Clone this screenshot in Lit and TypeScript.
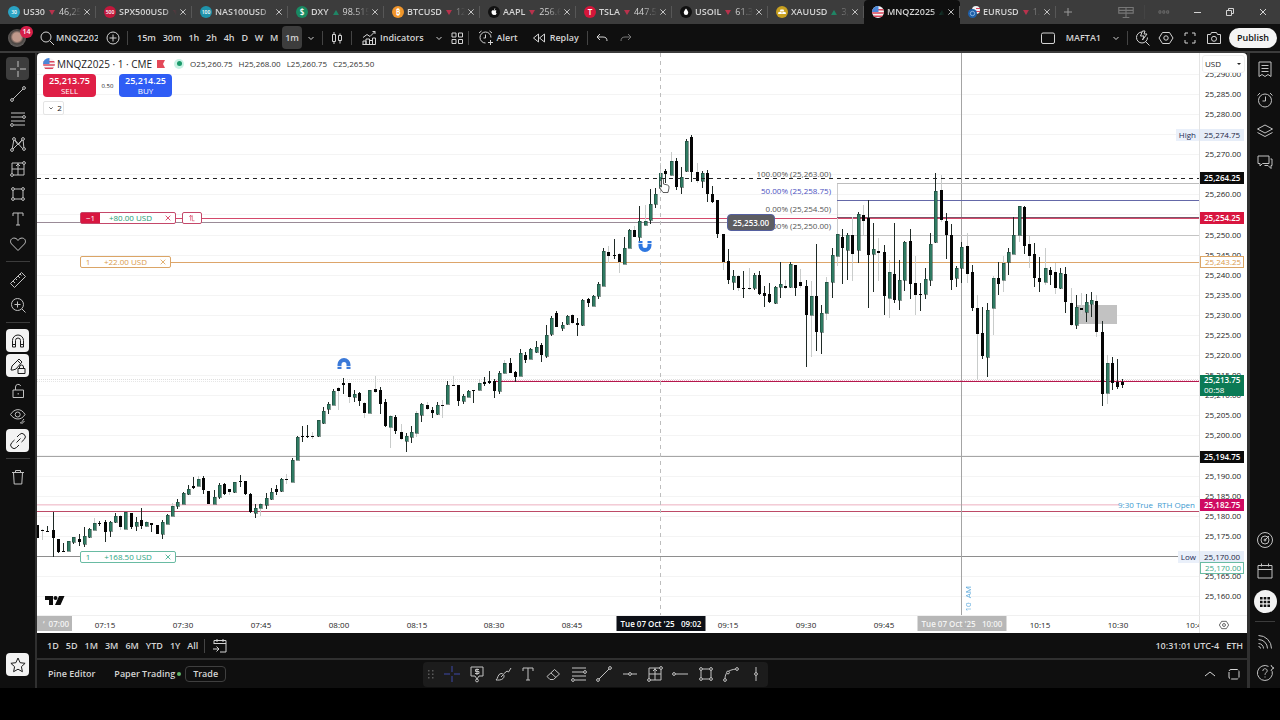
import { LitElement, html, svg, css, TemplateResult } from "lit";
import { customElement, property } from "lit/decorators.js";
import { classMap } from "lit/directives/class-map.js";

const node = (x: number, y: number) => svg`<circle cx=${x} cy=${y} r="1.4" fill="var(--node, #0f0f0f)"/>`;

const ICONS: Record<string, TemplateResult> = {
  cross: svg`<path d="M9 1v6M9 11v6M1 9h6M11 9h6"/>`,
  trend: svg`<path d="M4 14L14 4"/>${node(3, 15)}${node(15, 3)}`,
  fib: svg`<path d="M2 3h14M2 7h12M2 11h14M5 15h11"/>${node(15, 7)}${node(3, 15)}`,
  pattern: svg`<path d="M3 15L5 4l9 10M3 15L14 4l1 10M5 4l4 6 5-6"/>${node(3, 15)}${node(5, 4)}${node(14, 4)}${node(15, 14)}`,
  forecast: svg`<path d="M3 3h12v12H3zM3 9h12M9 3v12M7 6l2-2 2 2"/>${node(15, 3)}${node(3, 15)}`,
  rect: svg`<path d="M4 4h10v10H4z"/>${node(4, 4)}${node(14, 4)}${node(4, 14)}${node(14, 14)}`,
  text: svg`<path d="M4 6V3h10v3M9 3v12M7 15h4"/>`,
  heart: svg`<path d="M9 15.500L2.600 9C.6 6.800 1.500 3.500 4.600 3.100 6.500 2.900 8 3.800 9 5.500 10 3.800 11.500 2.900 13.400 3.100 16.500 3.500 17.400 6.800 15.400 9z"/>`,
  ruler: svg`<path d="M1.500 12.500l11-11 4 4-11 11zM4 10l2 2M6.500 7.500L8 9M9 5l2 2M11 3l1.500 1.500"/>`,
  zoomin: svg`<circle cx="8.500" cy="8.500" r="6"/><path d="M13 13l3.500 3.500M8.500 5.500v6M5.500 8.500h6"/>`,
  magnet: svg`<path d="M3.500 15V8.500a5.500 5.500 0 0 1 11 0V15h-3V8.500a2.500 2.500 0 0 0-5 0V15zM3.500 12.500h3M11.500 12.500h3"/>`,
  penlock: svg`<path d="M2 13l1-4L10 2l3 3-6 7-3 1zM8.500 3.500l3 3M9 11.500h7v5H9zM10.500 11.500V10a2 2 0 0 1 4 0v1.500"/>`,
  lock: svg`<path d="M4 8h10.500v7.500H4zM6.500 8V5a2.700 2.700 0 0 1 5.200-1M9.200 11v1.500"/>`,
  eye: svg`<path d="M1.500 7.500c4-6.500 11-6.500 14.500 0-3.500 6-10.500 6-14.500 0z"/><circle cx="8.700" cy="7.500" r="2.500"/><path d="M11 16c2 0 2-2 4-4M12.500 17l3-3"/>`,
  link: svg`<path d="M7.500 10.500l4-4M8 5l2.500-2.500a3.300 3.300 0 0 1 4.800 4.800L12.500 10M10 13l-2.500 2.500a3.300 3.300 0 0 1-4.800-4.800L5.500 8"/>`,
  trash: svg`<path d="M3 4.500h12M6.500 4.500v-2h5v2M4.500 4.500l.7 11.500h7.600l.7-11.500"/>`,
  star: svg`<path d="M9 2l2.100 4.700 5 .6-3.700 3.400 1 5L9 13.200l-4.400 2.500 1-5L1.900 7.300l5-.6z"/>`,
  search: svg`<circle cx="8" cy="8" r="5"/><path d="M12 12l4 4"/>`,
  pluscircle: svg`<circle cx="9" cy="9" r="6"/><path d="M9 5.500v7M5.500 9h7"/>`,
  chev: svg`<path d="M6.500 8L9 10.500 11.500 8"/>`,
  up: svg`<path d="M4 11l5-4 5 4"/>`,
  candles: svg`<path d="M4.500 5.500h3v7h-3zM6 3v2.500M6 12.500V15M10.500 6.500h3v5h-3zM12 4.500v2M12 11.500v3"/>`,
  indicators: svg`<path d="M3 15.500V12h3v3.500M6 15.500V10h3.500v5.500M9.500 15.500v-4h3v4M12.500 15.500V9h3v6.500M2.500 15.500h13M3 8.500l4-3 3 2 5-5M12.500 2.500H15V5"/>`,
  grid4: svg`<path d="M4 4h4v4H4zM10.500 4h4v4h-4zM4 10.500h4v4H4zM10.500 10.500h4v4h-4z"/>`,
  alert: svg`<path d="M14 8.500A5.500 5.500 0 1 0 8.500 14M8.500 5.500v3.500H6.500M2 4l2.500-2M12.500 2L15 4M13.500 11v5M11 13.500h5"/>`,
  clock: svg`<circle cx="9" cy="9.500" r="6.500"/><path d="M9.500 5.500v4.500H6.500M1.500 4.500L4 2M14 2l2.500 2.500"/>`,
  replay: svg`<path d="M8.500 5v8L3.500 9zM14.500 5v8l-5-4z"/>`,
  undo: svg`<path d="M7 5L4 8l3 3M4 8h6c3 0 4 1.500 4 4"/>`,
  redo: svg`<path d="M11 5l3 3-3 3M14 8H8c-3 0-4 1.500-4 4"/>`,
  layout: svg`<rect x="2.500" y="4" width="13" height="10.500" rx="1.500"/>`,
  square: svg`<rect x="4" y="4.500" width="10" height="9.500" rx="2" stroke-dasharray="7 1"/>`,
  quick: svg`<path d="M14.500 8.500A5.500 5.500 0 1 1 9 3M12.500 12.500l4 4M9.500 2l-2 5h3.500l-1.500 4 4.500-6h-3l1-3z"/>`,
  hex: svg`<path d="M5.500 3.500h7L16 9l-3.500 5.500h-7L2 9z"/><circle cx="9" cy="9" r="2.200"/>`,
  full: svg`<path d="M4 7V4h3M11 4h3v3M14 11v3h-3M7 14H4v-3"/>`,
  camera: svg`<path d="M2.500 5.500h3l1-2h5l1 2h3v9h-13z"/><circle cx="9" cy="9.800" r="2.500"/>`,
  news: svg`<path d="M3 2h12v14.500l-3-2-3 2-3-2-3 2zM5.500 5.500h7M5.500 8.500h7M5.500 11.500h7"/>`,
  layers: svg`<path d="M9 3l7.500 4L9 11 1.500 7zM1.500 10.500L9 14.500l7.500-4"/>`,
  chat: svg`<path d="M2 3h11v7.500H6.500L4 13v-2.500H2zM8.500 12.500H12l3 3v-3h1V6h-1.500"/>`,
  target: svg`<circle cx="9" cy="9" r="7.500"/><circle cx="9" cy="9" r="4"/><path d="M9 9l4-4"/><circle cx="9" cy="9" r="1"/>`,
  cal: svg`<path d="M2 3.500h14v12.500H2zM2 7.500h14M5.500 1.500v3M12.500 1.500v3"/>`,
  apps: svg`<path fill="#0f0f0f" stroke="none" d="M4 4h2.600v2.600H4zM7.700 4h2.600v2.600H7.700zM11.400 4H14v2.600h-2.600zM4 7.700h2.600v2.600H4zM7.700 7.700h2.600v2.600H7.700zM11.400 7.700H14v2.600h-2.600zM4 11.400h2.600V14H4zM7.700 11.400h2.600V14H7.700zM11.400 11.400H14V14h-2.600z"/>`,
  rss: svg`<path d="M2.500 2.500A13 13 0 0 1 15.500 15.500M2.500 6.500a9 9 0 0 1 9 9M2.500 10.500a5 5 0 0 1 5 5M2.500 13.500a2 2 0 0 1 2 2"/>`,
  help: svg`<path d="M16.200 7.200A7.500 7.500 0 1 1 12.500 2.400M6.800 7c0-3 4.400-3 4.400-.2 0 1.700-2.200 1.800-2.200 4M9 12.500v1M15 1l1 2 2 1-2 1-1 2"/>`,
  goto: svg`<path d="M3 7V3.500h12V15H9M3 6.500h12M6 2v3M12 2v3M2 12h6M5.500 9.500L8 12l-2.500 2.500"/>`,
  drag: svg`<path fill="#5a5a5a" stroke="none" d="M6 5h1.500v1.500H6zM10 5h1.500v1.500H10zM6 8.500h1.500V10H6zM10 8.500h1.500V10H10zM6 12h1.500v1.500H6zM10 12h1.500v1.500H10z"/>`,
  note: svg`<path d="M3 2h12v9h-4l-2 3-2-3H3zM11 4.500H7.500v2H11v2H7M9 3.500v6.500"/>${node(9, 15.500)}`,
  brush: svg`<path d="M2 15c2-1 1.500-6 5-6.500 3 0 4 3 2 5s-5 1.500-7 1.500zM9.500 9L13 6l1.500 1L17 3M7 12l2-2"/>`,
  eraser: svg`<path d="M3 11.500l7.500-7 5 4.500-6 5.500H6zM7 8l5 4.500"/>`,
  hline: svg`<path d="M2 9h14"/>${node(9, 9)}`,
  ray: svg`<path d="M4 9h13"/>${node(3, 9)}`,
  curve: svg`<path d="M3 14c0-6 3-9 11-10"/>${node(3, 15)}${node(6, 7.500)}${node(15, 4)}`,
  vline: svg`<path d="M9 2v14"/>${node(9, 9)}`,
  plus: svg`<path d="M9 5v8M5 9h8"/>`,
  close: svg`<path d="M6 6l6 6M12 6l-6 6"/>`,
  panes: svg`<path d="M2.500 5h13v5h-13zM9 5v9M6 14h6M2.500 7.500h13"/>`,
  dots: svg`<path d="M2.500 7.500H5v3H2.500zM7.500 7.500H10v3H7.500zM12.500 7.500H15v3h-2.500z"/>`,
  min: svg`<path d="M6 9.500h7"/>`,
  restore: svg`<path d="M5.500 7.500h5v5h-5zM7.500 7.500v-2h5v5h-2"/>`,
  flip: svg`<path d="M4 7l2.500-3L9 7M6.500 4v10M9.500 4v10h4"/>`,
};

const icon = (name: string, size = 18) =>
  html`<svg class="icon" width=${size} height=${size} viewBox="0 0 18 18" fill="none" stroke="currentColor" aria-hidden="true">${ICONS[name]}</svg>`;

const flag = (size: number) => html`<svg width=${size} height=${size} viewBox="0 0 12 12" aria-hidden="true">
  <clipPath id="disc"><circle cx="6" cy="6" r="6"/></clipPath>
  <g clip-path="url(#disc)"><path fill="#f4f4f6" d="M0 0h12v12H0z"/><path stroke="#d9455b" stroke-width="1.500" d="M0 3.800h12M0 7h12M0 10.200h12"/><path fill="#4a86d8" d="M0 0h6.500v6H0z"/></g></svg>`;

type Tone = "up" | "down";
interface Tab { sym: string; price: string; tone: Tone; color: string; mark: string; active?: boolean }
const TABS: Tab[] = [
  { sym: "US30", price: "46,25", tone: "down", color: "#2aa3c4", mark: "30" },
  { sym: "SPX500USD", price: "", tone: "down", color: "#c2183c", mark: "500" },
  { sym: "NAS100USD", price: "", tone: "up", color: "#1f93ab", mark: "100" },
  { sym: "DXY", price: "98.515", tone: "up", color: "#198a62", mark: "$" },
  { sym: "BTCUSD", price: "122", tone: "down", color: "#f0962c", mark: "₿" },
  { sym: "AAPL", price: "256.6", tone: "down", color: "#111111", mark: "apple" },
  { sym: "TSLA", price: "447.52", tone: "down", color: "#d5163a", mark: "T" },
  { sym: "USOIL", price: "61.30", tone: "down", color: "#111111", mark: "oil" },
  { sym: "XAUUSD", price: "3,9", tone: "up", color: "#c8a020", mark: "gold" },
  { sym: "MNQZ2025", price: "", tone: "up", color: "", mark: "us", active: true },
  { sym: "EURUSD", price: "1.1", tone: "down", color: "#2166b0", mark: "eu" },
];

const tabMark = (t: Tab) => {
  if (t.mark === "us") return flag(12);
  if (t.mark === "apple") return html`<svg width="12" height="12" viewBox="0 0 12 12"><circle cx="6" cy="6" r="6" fill="#111"/><path fill="#fff" d="M3.500 6c0-2 1.500-2 2.500-1.600C7.500 4 8.500 4.500 8.500 5c-1 .5-.8 1.800.2 2.200C8 9 7 9.200 6 8.800 5 9.200 3.500 8 3.500 6zM6 4c0-1 .6-1.600 1.300-1.700C7.300 3.200 6.800 3.800 6 4z"/></svg>`;
  if (t.mark === "oil") return html`<svg width="12" height="12" viewBox="0 0 12 12"><circle cx="6" cy="6" r="6" fill="#111"/><path fill="#fff" d="M6 2.500c1.500 2 2.200 3 2.200 4.300a2.200 2.200 0 0 1-4.400 0C3.800 5.500 4.500 4.500 6 2.500z"/></svg>`;
  if (t.mark === "gold") return html`<svg width="12" height="12" viewBox="0 0 12 12"><circle cx="6" cy="6" r="6" fill="#c8a020"/><path fill="#fff" d="M4.500 3.500h3l.8 2H3.700zM2.500 6h3l.5 2H2zM6.500 6h3l.5 2H6z"/></svg>`;
  if (t.mark === "eu") return html`<svg width="12" height="12" viewBox="0 0 12 12"><circle cx="8" cy="4" r="4" fill="#f2f2f4"/><path stroke="#d9455b" d="M8 2.500h4M8 5.500h4"/><circle cx="4.500" cy="7.500" r="4.500" fill="#1f5fa8"/><circle cx="4.500" cy="7.500" r="2.200" fill="none" stroke="#9cc4ea" stroke-width=".8"/></svg>`;
  return html`<span class="disc" style="background:${t.color}"><span class=${t.mark.length > 1 ? "tiny" : ""}>${t.mark}</span></span>`;
};

/* One bar per minute from 07:02: high, body top, body bottom, low, then g (rising), k (falling), l = faint wick. */
const BARS = `525 525 538 538 k|529 530 531 540 kl|526 531 532 532 k|512 530 538 557 k|539 539 552 553 k|543 551 552 552 k|541 541 551 551 g|537 537 542 544 g|534 539 542 546 k|527 536 544 547 g|528 529 537 538 g|518 523 530 530 gl|521 523 524 526 k|520 522 532 542 k|521 522 531 537 g|513 516 522 523 g|515 516 527 530 kl|512 512 529 529 g|513 513 527 529 k|517 522 526 531 g|508 520 526 529 k|521 522 526 527 gl|523 523 525 532 k|525 525 534 534 k|520 522 534 539 g|514 515 524 524 g|503 506 516 516 gl|499 502 506 509 g|492 493 504 504 g|485 489 494 495 g|477 486 488 489 k|476 479 486 486 gl|476 478 490 494 k|491 491 504 504 k|490 497 504 504 g|483 485 497 499 g|483 484 494 495 k|489 489 492 495 kl|482 482 492 493 g|475 481 482 487 k|481 481 494 495 k|493 494 512 513 k|504 508 513 518 g|503 504 508 516 gl|493 498 505 509 g|488 492 499 500 g|485 489 492 495 k|478 479 491 492 g|474 479 480 484 kl|458 460 482 482 g|436 437 460 460 g|426 436 437 442 k|425 436 437 438 k|432 436 437 439 kl|420 420 436 437 g|407 411 423 424 g|402 404 409 414 g|389 391 405 405 g|387 388 391 410 kl|378 383 385 394 k|383 383 397 403 kl|390 394 397 402 g|392 393 401 406 k|402 403 413 418 kl|390 390 413 413 g|376 389 392 393 kl|387 390 404 414 k|399 402 426 427 k|415 416 427 448 gl|415 417 431 434 k|424 432 439 440 kl|433 436 441 452 g|426 432 437 443 g|411 413 433 437 gl|403 404 415 422 g|402 405 409 410 kl|407 410 413 418 k|402 405 414 415 g|400 405 406 418 kl|381 385 404 404 g|376 385 386 386 kl|385 385 401 406 k|394 396 401 404 g|390 391 397 397 g|390 390 391 403 k|379 383 390 391 gl|377 382 384 386 k|371 381 383 384 k|379 381 391 398 k|371 373 391 394 g|360 363 373 374 gl|358 363 373 373 k|371 372 377 382 k|349 353 376 376 g|352 355 360 363 k|348 349 359 359 g|341 347 352 353 g|343 345 355 362 k|325 335 356 358 g|316 318 334 336 g|311 313 327 327 k|322 325 328 331 g|315 316 324 325 g|314 315 323 324 kl|318 323 325 336 k|299 300 325 326 g|298 299 303 307 k|295 296 306 306 g|282 284 296 299 g|248 251 286 286 g|246 252 256 263 kl|239 255 256 259 k|253 254 262 273 kl|237 248 264 264 g|229 230 248 248 g|226 230 237 237 kl|206 221 237 243 g|205 221 225 226 gl|189 204 220 224 g|188 194 204 208 g|163 173 188 190 gl|169 171 174 183 k|152 161 175 176 gl|158 161 187 190 k|167 177 187 194 g|139 141 171 172 g|135 137 172 182 k|163 172 181 183 kl|171 173 181 188 g|170 173 194 202 k|186 194 202 203 k|200 200 234 238 k|234 234 262 270 kl|249 261 280 284 k|270 276 282 290 g|275 276 288 291 kl|271 288 289 298 k|268 288 289 290 kl|273 275 288 290 g|271 275 294 295 k|286 293 296 307 k|283 294 302 303 k|286 287 303 304 g|262 284 287 298 g|280 286 288 289 kl|262 264 287 288 g|265 265 288 296 k|269 282 286 288 kl|280 286 315 367 k|281 296 315 357 gl|244 296 332 351 k|305 313 332 354 g|277 282 313 320 gl|248 255 282 298 g|228 234 256 266 gl|229 237 248 284 k|233 235 250 280 g|217 235 254 281 kl|212 214 250 263 g|205 215 221 235 kl|200 218 255 308 k|223 249 254 292 g|238 251 253 281 kl|245 252 296 315 k|260 272 298 318 gl|223 274 300 303 k|260 280 300 310 g|241 242 280 291 g|229 241 284 299 k|256 283 295 315 kl|283 294 295 311 k|268 279 294 299 g|233 244 280 286 g|173 191 242 243 g|175 190 220 222 kl|213 221 235 259 k|224 235 280 290 k|266 268 278 287 g|242 247 268 283 g|233 246 274 283 kl|265 272 308 311 k|295 308 334 380 kl|307 333 356 359 k|303 310 357 377 g|276 278 308 335 gl|262 278 284 295 k|256 263 280 292 gl|248 252 262 275 g|217 235 254 254 g|206 206 235 242 gl|206 207 246 254 k|235 244 256 268 kl|243 254 278 287 k|257 278 282 292 k|248 268 282 285 gl|267 270 275 285 k|263 272 288 294 kl|268 273 288 289 g|267 274 302 313 k|288 303 325 326 kl|295 307 325 329 g|293 308 310 314 kl|294 302 312 322 g|292 300 304 317 g|295 301 332 337 kl|321 332 394 406 k|355 363 393 404 gl|357 363 383 390 k|359 382 387 389 k|379 382 385 388 k`
  .split("|")
  .map((row) => {
    const [h, t, b, l, kind] = row.split(" ");
    return { h: +h, t: +t, b: +b, l: +l, up: kind[0] === "g", faint: kind.length > 1 };
  });

const PANE_TOP = 53;
const PANE_LEFT = 37;
const MINUTE = 5.193;
const barX = (i: number) => Math.floor(37.600 + i * MINUTE - PANE_LEFT);
const priceY = (p: number) => Math.round(234.500 + (25250 - p) * 4.017 - PANE_TOP);
const timeX = (minutesFromSeven: number) => Math.round(27.100 + minutesFromSeven * MINUTE - PANE_LEFT);
const fmt = (p: number) => p.toLocaleString("en-US", { minimumFractionDigits: 2 });

const base = css`
  * { box-sizing: border-box; }
  button { font: inherit; color: inherit; background: none; border: 0; padding: 0; margin: 0; display: flex; align-items: center; justify-content: center; white-space: pre; }
  svg { display: block; flex: none; }
`;

@customElement("tv-chart")
export class TvChart extends LitElement {
  static styles = [base, css`
    :host { flex: 1; min-height: 0; display: grid; grid-template-columns: minmax(0, 1fr) 48px; grid-template-rows: minmax(0, 1fr) 18px; background: #fff; border-radius: 4px 4px 0 0; overflow: hidden; color: #1c1c1c; font-size: 8px; line-height: 12px; }
    .pane { position: relative; overflow: hidden; }
    .plot { position: absolute; inset: 0; width: 100%; height: 100%; }
    .over { position: absolute; white-space: pre; }
    .legend { position: absolute; left: 6px; top: 4px; display: flex; flex-direction: column; align-items: flex-start; gap: 4px; }
    .title { display: flex; align-items: center; height: 13px; font-size: 10px; }
    .title .name { margin-left: 2px; margin-right: 5px; }
    .dot { width: 10px; height: 10px; border-radius: 5px; background: #c8f2e4; display: grid; place-items: center; margin: 0 6px 0 9px; }
    .dot::after { content: ""; width: 5px; height: 5px; border-radius: 3px; background: #1b9a6b; }
    .ohlc { display: flex; gap: 6px; font-size: 8px; color: #333; }
    .deal { display: flex; align-items: center; }
    .deal button { flex-direction: column; width: 53px; height: 23px; border-radius: 4px; color: #fff; font-size: 9px; line-height: 10px; font-weight: 600; }
    .deal .small { font-weight: 400; font-size: 8px; }
    .sell { background: #df1f46; }
    .buy { background: #2f5df5; }
    .spread { width: 23px; text-align: center; font-size: 6px; }
    .count { width: 21px; height: 14px; border: 1px solid #e4e4e4; border-radius: 2px; }
    .order { display: flex; height: 12px; border: 1px solid; border-radius: 2px; background: #fff; left: 43px; line-height: 10px; }
    .order .qty { width: 14px; text-align: center; }
    .order .pnl { width: 66px; text-align: center; }
    .order.narrow .pnl { width: 61px; }
    .order button { width: 14px; }
    .red { color: #d2214a; border-color: #c4486a; }
    .red .qty { background: #d81640; color: #fff; width: 19px; }
    .red .pnl { color: #249a72; width: 61px; }
    .flip { left: 145px; width: 20px; justify-content: center; }
    .orange { color: #d99a4c; border-color: #dba566; }
    .green { color: #2ba582; border-color: #69bba3; }
    .fib { right: 368px; text-align: right; color: #555; }
    .fib.blue { color: #4a4fc0; }
    .tip { left: 690px; width: 48px; height: 17px; border-radius: 4px; border: 1px solid #5560a0; background: #5d5d62; color: #fff; text-align: center; line-height: 15px; font-weight: 600; }
    .note { right: 4px; color: #3d9ad0; }
    .hour { color: #5aa8dc; writing-mode: vertical-rl; transform: rotate(180deg); font-size: 8px; }
    .edge { right: 0; padding: 0 3px; background: #eaf0fa; color: #222a55; }
    .axis { position: relative; overflow: hidden; border-left: 1px solid #e4e4e4; }
    .axis .lab { position: absolute; left: 5px; line-height: 12px; margin-top: -6px; }
    .axis .tag { position: absolute; left: 0; width: 44px; padding-left: 4px; line-height: 12px; margin-top: -6px; font-weight: 600; color: #fff; }
    .tag.black { background: #0b0b0b; }
    .tag.crimson { background: #d8153f; }
    .tag.magenta { background: #cf0a62; }
    .axis .tag.teal { background: #0b7a55; line-height: 10px; padding-bottom: 1px; }
    .axis .tag.pale { background: #e6edf8; color: #1c2440; font-weight: 400; }
    .axis .tag.line-orange, .axis .tag.line-green { background: #fff; font-weight: 400; line-height: 10px; border: 1px solid #dba566; color: #d99a4c; }
    .axis .tag.line-green { border-color: #69bba3; color: #3aa888; }
    .teal span { font-weight: 400; }
    select { position: absolute; left: 2px; top: 2px; width: 43px; height: 18px; z-index: 1; appearance: none; border: 1px solid #eee; border-radius: 3px; background: #fff; font: inherit; color: #222; padding: 0 2px; }
    .arrow { position: absolute; left: 37px; top: 10px; z-index: 2; border: 2px solid transparent; border-top-color: #222; }
    .times { position: relative; overflow: hidden; border-top: 1px solid #f0f0f0; }
    .times span { position: absolute; transform: translateX(-50%); line-height: 17px; white-space: pre; }
    .times .cursor, .times .session { background: #0c0f16; color: #fff; line-height: 15px; width: 89px; text-align: center; font-weight: 600; }
    .times .session { background: rgba(178, 178, 178, .93); color: #f4f4f4; }
    .times .first { left: 0; transform: none; width: 35px; padding-left: 3px; }
    .corner { border-left: 1px solid #e4e4e4; border-top: 1px solid #f0f0f0; }
    .corner button { width: 100%; height: 100%; }
  `];

  private plot() {
    const line = (y: number, color: string, x1: number | string = 0, x2: number | string = "100%", dash = "") =>
      svg`<line x1=${x1} x2=${x2} y1=${y + .5 - PANE_TOP} y2=${y + .5 - PANE_TOP} stroke=${color} stroke-dasharray=${dash}/>`;
    const grid: number[] = [];
    for (let p = 25160; p <= 25290; p += 5) grid.push(p);
    return html`<svg class="plot" shape-rendering="crispEdges">
      ${grid.map((p) => svg`<line x1="0" x2="100%" y1=${priceY(p) + .5} y2=${priceY(p) + .5} stroke="#f4f4f4"/>`)}
      ${line(379, "#dedede", 0, "100%", "1 1")}${line(381, "#e6e6e6", 0, 457, "1 1")}
      ${line(456, "#a6a6a6")}
      ${line(504, "#f3ccd6", 0, 1082)}${line(505, "#f8e2e8", 0, 1082)}${line(511, "#bd4a66")}
      ${line(556, "#8e8e8e")}
      <rect x="1040" y="252" width="40" height="19" fill="#c2c2c2"/>
      <line x1="924.500" x2="924.500" y1="0" y2="100%" stroke="#a4a4a4"/>
      ${line(218, "#d4486a", 43)}${line(222, "#9a8b97", 0, 690)}
      ${line(262, "#dda56a", 43)}
      <line x1="800.500" x2="800.500" y1="130" y2="181" stroke="#cccccc"/>
      ${line(183, "#bdbdbd", 800)}${line(200, "#6468a8", 800)}${line(217, "#7d5368", 800)}${line(235, "#c4c4c4", 800)}
      ${line(380, "#eeb0c4", 457, "100%", "1 1")}${line(381, "#b4174c", 457)}
      ${BARS.map((c, i) => {
        const x = barX(i);
        return svg`<rect x=${x} y=${c.h - PANE_TOP} width="1" height=${c.l - c.h} fill=${c.faint ? "#c9cccb" : "#1f2a26"}/>
          <rect x=${x - 1} y=${c.t - PANE_TOP} width="3" height=${Math.max(1, c.b - c.t)} fill=${c.up ? "#2f7a62" : "#050505"} stroke=${c.up ? "#17352b" : "none"} stroke-width=".5"/>`;
      })}
      <line x1="623.500" x2="623.500" y1="0" y2="100%" stroke="#bdbdbd" stroke-dasharray="4 4"/>
      <line x1="0" x2="100%" y1="125.500" y2="125.500" stroke="#222" stroke-dasharray="4 4"/>
      <g shape-rendering="auto">
        <path d="M302.500 316v-4.500a4.500 4.500 0 0 1 9 0v4.500" fill="none" stroke="#3b79d8" stroke-width="4"/>
        <path d="M300 313.500h14" stroke="#fff" stroke-width=".8"/>
        <path d="M603.500 188v4.500a4.500 4.500 0 0 0 9 0V188" fill="none" stroke="#2e77e0" stroke-width="4"/>
        <path d="M601 190.500h14" stroke="#fff" stroke-width=".8"/>
        <path d="M624.500 133v-6.500q1.200-1.500 2 0V131l4 1q2 .5 1.500 3l-1 4.500h-5l-3.500-5q0-1.500 2-.5z" fill="#fff" stroke="#333" stroke-width=".8"/>
        <path d="M8 543h8v9h-4v-5H8zM22 543h5.500l-4 9H18z" fill="#0c0c0c"/><circle cx="18.500" cy="545" r="2" fill="#0c0c0c"/>
      </g>
    </svg>`;
  }

  private order(y: number, kind: string, qty: string, pnl: string) {
    return html`<div class="over order ${kind}" style="top:${y - PANE_TOP}px"><span class="qty">${qty}</span><span class="pnl">${pnl}</span><button aria-label="Cancel">${icon("close", 14)}</button></div>`;
  }

  render() {
    const labels: number[] = [];
    for (let p = 25160; p <= 25290; p += 5) labels.push(p);
    const tag = (y: number, cls: string, text: string | TemplateResult) =>
      html`<div class="tag ${cls}" style="top:${y - PANE_TOP}px">${text}</div>`;
    const times = [15, 30, 45, 60, 75, 90, 105, 135, 150, 165, 180, 195, 210, 225];
    return html`
      <div class="pane">
        ${this.plot()}
        <div class="legend">
          <div class="title">${flag(12)}<span class="name">MNQZ2025 · 1 · CME</span>
            <svg width="8" height="8" viewBox="0 0 8 8"><path fill="#e34858" d="M0 0h8L6 4l2 4H0z"/></svg>
            <span class="dot"></span>
            <span class="ohlc"><span>O25,260.75</span><span>H25,268.00</span><span>L25,260.75</span><span>C25,265.50</span></span></div>
          <div class="deal"><button class="sell">25,213.75<span class="small">SELL</span></button><span class="spread">0.50</span><button class="buy">25,214.25<span class="small">BUY</span></button></div>
          <button class="count">${icon("chev", 12)}2</button>
        </div>
        ${this.order(212, "red", "−1", "+80.00 USD")}
        <button class="over order red flip" style="top:159px" aria-label="Reverse position">${icon("flip", 10)}</button>
        ${this.order(256, "orange narrow", "1", "+22.00 USD")}
        ${this.order(551, "green", "1", "+168.50 USD")}
        <span class="over fib" style="top:115px">100.00% (25,263.00)</span>
        <span class="over fib blue" style="top:132px">50.00% (25,258.75)</span>
        <span class="over fib" style="top:150px">0.00% (25,254.50)</span>
        <span class="over fib" style="top:167px">-100.00% (25,250.00)</span>
        <span class="over tip" style="top:161px">25,253.00</span>
        <span class="over note" style="top:446px">9:30 True  RTH Open</span>
        <span class="over hour" style="left:925px;top:533px">10  AM</span>
        <span class="over edge" style="top:76px">High</span>
        <span class="over edge" style="top:498px">Low</span>
      </div>
      <div class="axis">
        ${labels.map((p) => html`<span class="lab" style="top:${priceY(p)}px">${fmt(p)}</span>`)}
        <select aria-label="Currency"><option>USD</option></select><i class="arrow"></i>
        ${tag(135, "pale", "25,274.75")}${tag(178, "black", "25,264.25")}${tag(218, "crimson", "25,254.25")}
        ${tag(262, "line-orange", "25,243.25")}${tag(381, "teal", html`25,213.75<br><span>00:58</span>`)}
        ${tag(457, "black", "25,194.75")}${tag(505, "magenta", "25,182.75")}
        ${tag(557, "pale", "25,170.00")}${tag(568, "line-green", "25,170.00")}
      </div>
      <div class="times">
        ${times.map((m) => html`<span style="left:${timeX(m)}px">${String(7 + Math.floor(m / 60)).padStart(2, "0")}:${String(m % 60).padStart(2, "0")}</span>`)}
        <span class="session first">‘  07:00</span>
        <span class="cursor" style="left:${timeX(122)}px">Tue 07 Oct '25   09:02</span>
        <span class="session" style="left:${timeX(180)}px">Tue 07 Oct '25   10:00</span>
      </div>
      <div class="corner"><button aria-label="Scale settings">${icon("hex", 12)}</button></div>`;
  }
}

@customElement("tool-button")
export class ToolButton extends LitElement {
  @property() name = "";
  @property() tone = "";
  @property() label = "";
  static styles = [base, css`
    :host { display: block; }
    button { width: 23px; height: 23px; border-radius: 4px; color: #c2c2c2; }
    .on { background: #3d3d3d; }
    .light { background: #f3f3f3; color: #1a1a1a; }
    .round { background: #f3f3f3; border-radius: 12px; }
    .blue { color: #3c49a8; }
  `];
  render() {
    return html`<button class=${this.tone} aria-label=${this.label || this.name}>${icon(this.name)}</button>`;
  }
}

const tool = (spec: string) => {
  if (spec === "-") return html`<i class="sep"></i>`;
  const [name, tone = ""] = spec.split(":");
  return html`<tool-button name=${name} tone=${tone}></tool-button>`;
};

@customElement("app-root")
export class AppRoot extends LitElement {
  static styles = [base, css`
    :host { box-sizing: border-box; display: flex; flex-direction: column; height: 100vh; padding-bottom: 32px; background: #000; color: #d4d4d4; font: 9px/12px "Open Sans", "Noto Sans", sans-serif; overflow: hidden; }
    .tabs { display: flex; height: 24px; background: #3c3c3c; flex: none; align-items: stretch; }
    .tab { flex: 0 1 96px; min-width: 0; display: flex; align-items: center; padding: 0 3px 0 8px; font-weight: 600; position: relative; }
    .tab::after { content: ""; width: 1px; height: 12px; background: #575757; position: absolute; right: 0; }
    .tab.active { background: #0f0f0f; border-radius: 4px 4px 0 0; }
    .tab .what { flex: 1; min-width: 0; margin-left: 3px; justify-content: flex-start; gap: 4px; overflow: hidden; -webkit-mask-image: linear-gradient(90deg, #000 75%, transparent); mask-image: linear-gradient(90deg, #000 75%, transparent); }
    .tab .price { font-weight: 400; }
    .tab .x { width: 12px; }
    .disc { width: 12px; height: 12px; border-radius: 6px; display: grid; place-items: center; color: #fff; font-size: 8px; line-height: 12px; flex: none; }
    .tiny { font-size: 5px; }
    .tri { flex: none; border: 3px solid transparent; border-top: 0; border-bottom: 5px solid #1f8565; }
    .tri.down { border-bottom: 0; border-top: 5px solid #b8324c; }
    .win { margin-left: auto; display: flex; align-items: center; padding-right: 1px; }
    .win button { width: 33px; }
    .win .faint, .dim { color: #777; }
    .add { width: 24px; color: #999; }
    .bar { display: flex; height: 27px; background: #0f0f0f; align-items: center; flex: none; font-weight: 600; padding: 0 3px 0 8px; }
    .rule { height: 2px; background: #3c3c3c; flex: none; }
    .avatar { position: relative; width: 18px; height: 18px; border-radius: 9px; background: radial-gradient(circle at 50% 45%, #c09a8c 0 32%, #4a4542 50%, #8d8c8c); }
    .badge { position: absolute; left: 12px; top: -3px; width: 13px; height: 12px; border-radius: 6px; background: #d6204a; color: #fff; font-size: 7px; line-height: 12px; text-align: center; }
    .search { margin-left: 12px; width: 60px; justify-content: flex-start; overflow: hidden; margin-right: 3px; }
    .w24 { width: 24px; }
    .vr { width: 1px; height: 14px; background: #444; flex: none; margin: 0 2px; }
    .ivs { display: flex; width: 168px; margin-left: 4px; justify-content: space-between; }
    .ivs button { padding: 0 3px; height: 23px; border-radius: 4px; }
    .ivs .sel { background: #3d3d3d; }
    .lbl { padding: 0 6px; gap: 2px; }
    .right { margin-left: auto; display: flex; align-items: center; }
    .publish { height: 20px; padding: 0 8px; border-radius: 10px; background: #f4f4f4; color: #111; margin-left: 3px; }
    .body { flex: 1; min-height: 0; display: flex; background: #0f0f0f; }
    .rail { width: 35px; flex: none; display: flex; flex-direction: column; align-items: center; gap: 2px; padding: 4px 0 12px; background: #0f0f0f; }
    .rail .sep { width: 24px; height: 1px; background: #3c3c3c; margin: 4px 0; flex: none; }
    .rail .push { margin-top: auto; }
    .rail.wide { width: 30px; gap: 8px; padding-bottom: 4px; }
    .rail.wide .sep { margin: 0; width: 20px; }
    .center { flex: 1; min-width: 0; display: flex; flex-direction: column; border: solid #303030; border-width: 0 3px 0 2px; }
    .ranges { height: 27px; flex: none; display: flex; align-items: center; gap: 1px; background: #0f0f0f; border-bottom: 2px solid #303030; padding: 0 1px 0 7px; font-weight: 600; }
    .ranges button { padding: 0 3px; }
    .ranges .right { gap: 4px; }
    .panel { height: 28px; flex: none; display: flex; align-items: center; padding: 0 1px 0 6px; background: #0f0f0f; font-weight: 600; }
    .docks { width: 380px; display: flex; align-items: center; }
    .docks button { padding: 0 5px; height: 16px; }
    .docks .paper { margin-left: 9px; padding-right: 4px; }
    .docks .paper::after { content: ""; width: 4px; height: 4px; border-radius: 2px; background: #5fb868; margin-left: 2px; }
    .docks .trade { border: 1px solid #3f3f3f; border-radius: 4px; padding: 0 7px; }
    .draw { --node: #1c1c1c; display: flex; justify-content: space-between; min-width: 345px; padding: 1px 0; background: #1c1c1c; border-radius: 4px; }
    .draw tool-button:first-child { margin-right: -4px; margin-left: -4px; }
  `];

  render() {
    return html`
      <nav class="tabs">
        ${TABS.map((t) => html`<div class=${classMap({ tab: true, active: !!t.active })}>
          ${tabMark(t)}<button class="what">${t.sym}<i class="tri ${t.tone}"></i><span class="price">${t.price}</span></button>
          <button class="x" aria-label="Close tab">${icon("close", 16)}</button></div>`)}
        <button class="add" aria-label="New tab">${icon("plus")}</button>
        <div class="win">
          <button class="faint" aria-label="Panes">${icon("panes", 20)}</button><i class="vr"></i>
          <button class="faint" aria-label="More">${icon("dots", 14)}</button><button aria-label="Minimise">${icon("min")}</button>
          <button aria-label="Restore">${icon("restore")}</button><button aria-label="Close">${icon("close")}</button>
        </div>
      </nav>
      <header class="bar">
        <button class="avatar" aria-label="Account"><span class="badge">14</span></button>
        <button class="search">${icon("search")}MNQZ2025</button>
        <button class="w24" aria-label="Compare">${icon("pluscircle")}</button>
        <i class="vr"></i>
        <div class="ivs">${["15m", "30m", "1h", "2h", "4h", "D", "W", "M", "1m"].map((v) => html`<button class=${v === "1m" ? "sel" : ""}>${v}</button>`)}</div>
        <button aria-label="More intervals">${icon("chev")}</button><i class="vr"></i>
        <button class="w24" aria-label="Chart type">${icon("candles")}</button><i class="vr"></i>
        <button class="lbl">${icon("indicators")}Indicators</button>
        <button aria-label="Favourites">${icon("chev")}</button>
        <button aria-label="Templates">${icon("grid4")}</button><i class="vr"></i>
        <button class="lbl">${icon("alert")}Alert</button>
        <button class="lbl">${icon("replay")}Replay</button><i class="vr"></i>
        <button class="w24" aria-label="Undo">${icon("undo")}</button>
        <button class="w24 dim" aria-label="Redo">${icon("redo")}</button>
        <div class="right">
          <button class="w24" aria-label="Layout">${icon("layout")}</button><button class="lbl">MAFTA1</button>
          <button aria-label="Layouts">${icon("chev")}</button><i class="vr"></i>
          <button class="w24" aria-label="Quick search">${icon("quick")}</button><button class="w24" aria-label="Settings">${icon("hex")}</button>
          <button class="w24" aria-label="Fullscreen">${icon("full")}</button><button class="w24" aria-label="Snapshot">${icon("camera")}</button>
          <button class="publish">Publish</button>
        </div>
      </header>
      <div class="rule"></div>
      <div class="body">
        <aside class="rail">
          ${["cross:on", "trend", "fib", "pattern", "forecast", "rect", "text", "heart", "-", "ruler", "zoomin", "-", "magnet:light", "penlock:light", "lock", "eye", "link:light", "-", "trash"].map(tool)}
          <tool-button class="push" name="star" tone="light"></tool-button>
        </aside>
        <main class="center">
          <tv-chart></tv-chart>
          <div class="ranges">
            ${["1D", "5D", "1M", "3M", "6M", "YTD", "1Y", "All"].map((v) => html`<button>${v}</button>`)}
            <i class="vr"></i><button aria-label="Go to date">${icon("goto")}</button>
            <div class="right"><span>10:31:01 UTC-4</span><button>ETH</button></div>
          </div>
          <div class="panel">
            <div class="docks"><button>Pine Editor</button><button class="paper">Paper Trading</button><button class="trade">Trade</button></div>
            <div class="draw">${["drag", "cross:blue", "note", "brush", "text", "eraser", "fib", "trend", "hline", "forecast", "ray", "rect", "curve", "vline"].map(tool)}</div>
            <div class="right"><button class="w24" aria-label="Expand">${icon("up")}</button><button class="w24" aria-label="Maximise">${icon("square")}</button></div>
          </div>
        </main>
        <aside class="rail wide">
          ${["news", "clock", "layers", "chat"].map(tool)}
          <tool-button class="push" name="target"></tool-button>
          ${["cal", "apps:round", "-", "rss", "help"].map(tool)}
        </aside>
      </div>`;
  }
}
